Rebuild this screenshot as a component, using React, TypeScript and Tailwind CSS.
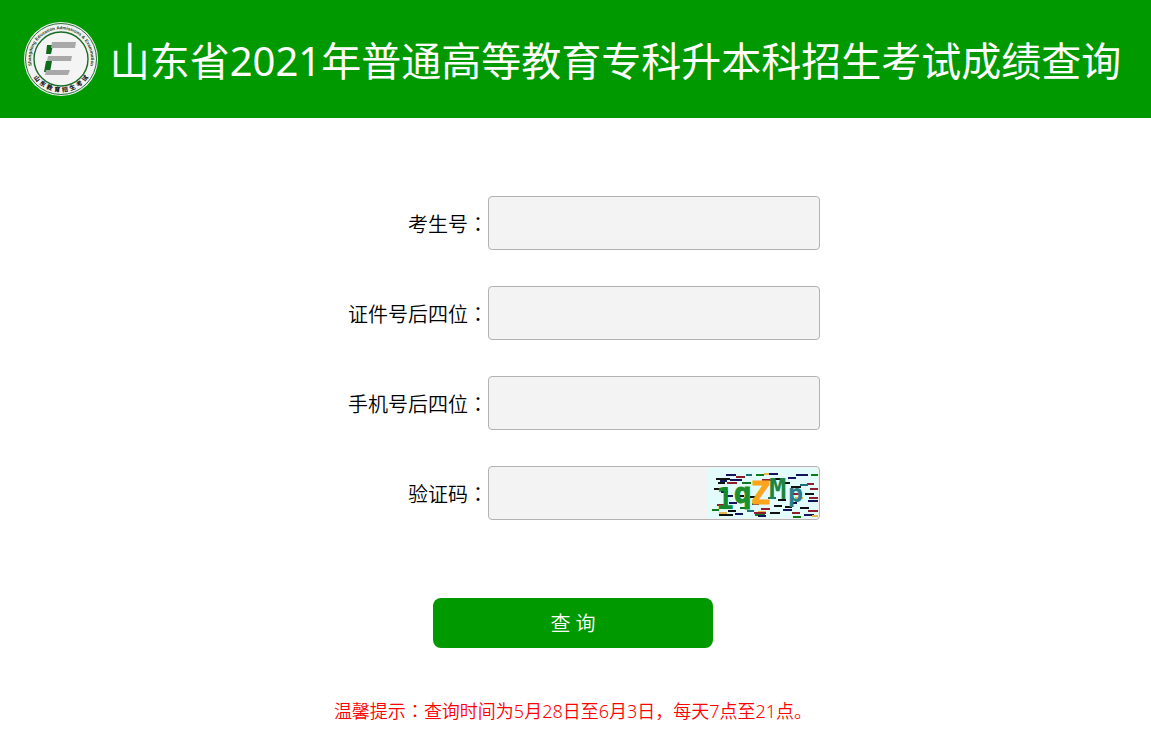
import type { ReactNode } from 'react';

const SEAL_NAME = 'Shangdong Education Admissions & Examination';

// x, y, width, colour index of every noise dash in the captcha
const NOISE_COLORS = ['#14145a', '#0d7a1c', '#8f1d2c', '#111111', '#1d6f80', '#e8b84a'];
const NOISE = [
  [18, 6, 10, 0], [28, 8, 9, 2], [8, 10, 14, 3], [22, 11, 12, 0], [10, 14, 7, 3], [19, 14, 10, 2],
  [6, 20, 9, 3], [13, 23, 7, 0], [18, 27, 7, 0], [34, 14, 9, 1], [38, 6, 6, 4], [48, 6, 8, 1],
  [60, 5, 10, 0], [54, 11, 10, 2], [65, 10, 9, 3], [75, 14, 7, 3], [80, 9, 8, 0], [88, 6, 12, 0],
  [103, 6, 7, 1], [99, 15, 7, 2], [83, 18, 10, 3], [92, 16, 8, 4], [102, 20, 8, 2], [97, 25, 9, 3],
  [101, 29, 9, 2], [100, 32, 10, 0], [92, 39, 9, 3], [100, 42, 10, 2], [96, 46, 10, 0], [84, 44, 8, 2],
  [75, 41, 9, 0], [66, 37, 8, 3], [62, 44, 10, 3], [53, 40, 9, 2], [47, 46, 10, 1], [39, 42, 7, 4],
  [32, 39, 9, 1], [27, 45, 8, 0], [20, 42, 8, 3], [11, 46, 14, 3], [4, 41, 7, 1], [9, 36, 8, 2],
  [21, 34, 8, 0], [28, 27, 8, 3], [42, 28, 8, 3], [44, 35, 7, 0], [60, 29, 8, 4], [70, 31, 8, 3],
  [82, 34, 7, 0], [11, 44, 8, 5], [50, 43, 8, 5], [56, 5, 5, 5], [87, 29, 8, 5], [104, 47, 6, 5],
  [12, 12, 7, 0], [46, 44, 12, 2], [50, 47, 8, 0], [84, 25, 10, 2], [77, 38, 7, 3], [85, 48, 8, 1],
];

const rad = (deg: number) => (deg * Math.PI) / 180;

function Seal() {
  return (
    <svg viewBox="0 0 74 74" className="size-[74px] shrink-0" role="img" aria-label="山东教育招生考试">
      <defs>
        <path id="seal-top" d="M9 48A30 30 0 1 1 65 48" />
      </defs>
      <circle cx="37" cy="37" r="37" fill="#f2f2f2" />
      <circle cx="37" cy="37" r="35.5" fill="none" stroke="#28703a" strokeWidth="1" />
      <circle cx="37" cy="37" r="27" fill="#f4f4f4" stroke="#176b25" strokeWidth="1.4" />
      <text
        fontSize="4.5"
        fontWeight="700"
        fill="#173f20"
        textAnchor="middle"
        fontFamily="'Liberation Sans', sans-serif"
      >
        <textPath href="#seal-top" startOffset="50%">
          {SEAL_NAME}
        </textPath>
      </text>
      <g fontSize="6" fontWeight="900" fill="#222" textAnchor="middle" fontFamily="'Noto Sans CJK SC', sans-serif">
        {'山东教育招生考试'.split('').map((char, i) => {
          const angle = 141 - i * 14.6;
          return (
            <text
              key={i}
              transform={`translate(${37 + 31 * Math.cos(rad(angle))} ${37 + 31 * Math.sin(rad(angle))}) rotate(${angle - 90})`}
              y="2"
            >
              {char}
            </text>
          );
        })}
      </g>
      <path d="M23 23H29L27 32H22ZM22 39H28L26 50H20Z" fill="#0d6b1b" />
      <path d="M28 20H52L51 26H27ZM24 34H48L47 39H23ZM22 48H46L44 53H21Z" fill="#a9a9a9" />
    </svg>
  );
}

function Captcha() {
  return (
    <svg viewBox="0 0 110 50" className="h-[50px] w-[110px]" role="img" aria-label="验证码图片">
      <rect width="110" height="50" fill="#e2fbfb" />
      {NOISE.map(([x, y, width, color], i) => (
        <rect key={i} x={x} y={y} width={width} height="2" fill={NOISE_COLORS[color]} />
      ))}
      <g fontFamily="'DejaVu Sans Mono', monospace" fontWeight="700" strokeWidth="1">
        <text x="8" y="41" fontSize="30" fill="#148a2c">1</text>
        <text x="26" y="35" fontSize="29" fill="#1d8f2b" stroke="#1d8f2b">q</text>
        <text x="43" y="36" fontSize="32" fill="#fba51c" stroke="#fba51c">Z</text>
        <text x="61" y="31" fontSize="29" fill="#1c8540">M</text>
        <text x="80" y="34" fontSize="25" fill="#27808a">p</text>
      </g>
    </svg>
  );
}

function Colon() {
  return <span className="font-['Noto_Sans_CJK_JP',sans-serif]">：</span>;
}

interface FieldProps {
  id: string;
  label: string;
  children?: ReactNode;
}

function Field({ id, label, children }: FieldProps) {
  return (
    <div className="flex items-center">
      <label htmlFor={id} className="w-[162px] shrink-0 pt-0.5 text-right text-xl font-[350] text-black">
        {label}
        <Colon />
      </label>
      <div className="relative flex-1">
        <input
          id={id}
          type="text"
          className="block h-[54px] w-full rounded-[4px] border border-[#b2b2b2] bg-[#f3f3f3] px-3 text-xl outline-none"
        />
        {children}
      </div>
    </div>
  );
}

export default function App() {
  return (
    <div className="min-h-screen bg-white font-['Noto_Sans','Noto_Sans_CJK_SC',sans-serif]">
      <header className="flex h-[118px] items-center justify-center gap-3 bg-[#009900] pr-1.5">
        <Seal />
        <h1 className="whitespace-nowrap pt-1 text-[40px] leading-[60px] text-white">
          山东省2021年普通高等教育专科升本科招生考试成绩查询
        </h1>
      </header>

      <main className="flex flex-col items-center pt-[78px] pr-[5px]">
        <form className="flex w-[494px] max-w-full flex-col items-center" onSubmit={(e) => e.preventDefault()}>
          <div className="flex w-full flex-col gap-9">
            <Field id="candidate" label="考生号" />
            <Field id="id-card" label="证件号后四位" />
            <Field id="phone" label="手机号后四位" />
            <Field id="captcha" label="验证码">
              <button type="button" aria-label="刷新验证码" className="absolute top-0.5 right-0.5 cursor-pointer">
                <Captcha />
              </button>
            </Field>
          </div>
          <button
            type="submit"
            className="mt-[78px] h-[50px] w-[280px] rounded-lg bg-[#009900] pt-0.5 text-xl font-[350] text-white"
          >
            查 询
          </button>
        </form>
        <p className="mt-12 text-lg leading-7 font-[350] text-[#ff0000]">
          温馨提示
          <Colon />
          查询时间为5月28日至6月3日，每天7点至21点。
        </p>
      </main>
    </div>
  );
}
